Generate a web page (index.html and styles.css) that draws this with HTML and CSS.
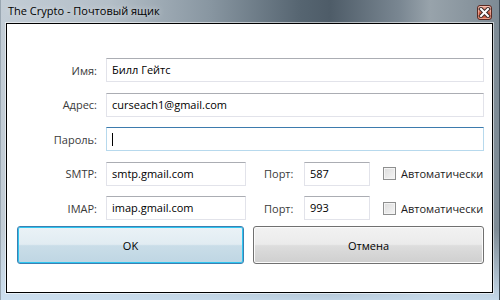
FILE: index.html
```html
<!DOCTYPE html>
<html lang="ru">
<head>
<meta charset="utf-8">
<title>The Crypto - Почтовый ящик</title>
<link rel="stylesheet" href="styles.css">
</head>
<body>
<div class="window">
  <div class="titlebar">
    <span class="title">The Crypto - Почтовый ящик</span>
    <div class="close">
      <svg width="13" height="11" viewBox="0 0 13 11">
        <path d="M3 2 L10 9 M10 2 L3 9" stroke="#3a2a28" stroke-width="4" stroke-linecap="square"/>
        <path d="M3 2 L10 9 M10 2 L3 9" stroke="#ffffff" stroke-width="2" stroke-linecap="square"/>
      </svg>
    </div>
  </div>
  <div class="client">
    <div class="form">
      <div class="row">
        <span class="lbl">Имя:</span>
        <div class="field wide">Билл Гейтс</div>
      </div>
      <div class="row">
        <span class="lbl">Адрес:</span>
        <div class="field wide">curseach1@gmail.com</div>
      </div>
      <div class="row">
        <span class="lbl">Пароль:</span>
        <div class="field wide focused"><span class="caret"></span></div>
      </div>
      <div class="row">
        <span class="lbl">SMTP:</span>
        <div class="field host">smtp.gmail.com</div>
        <span class="port-lbl">Порт:</span>
        <div class="field port">587</div>
        <span class="check"></span>
        <span class="check-lbl">Автоматически</span>
      </div>
      <div class="row">
        <span class="lbl">IMAP:</span>
        <div class="field host">imap.gmail.com</div>
        <span class="port-lbl">Порт:</span>
        <div class="field port">993</div>
        <span class="check"></span>
        <span class="check-lbl">Автоматически</span>
      </div>
    </div>
    <div class="buttons">
      <div class="btn ok">OK</div>
      <div class="btn cancel">Отмена</div>
    </div>
  </div>
</div>
</body>
</html>
```

FILE: styles.css
```css
* { box-sizing: border-box; }
html, body { margin: 0; padding: 0; }
body {
  width: 500px;
  height: 300px;
  overflow: hidden;
  font-family: "Open Sans", "Noto Sans", sans-serif;
  font-size: 11px;
}
.window {
  width: 500px;
  height: 300px;
  display: flex;
  flex-direction: column;
  padding: 0 7px 7px 6px;
  background:
    linear-gradient(180deg, rgba(255,255,255,0) 0px, rgba(255,255,255,0) 230px, rgba(205,225,242,0.9) 300px),
    linear-gradient(90deg, #c3cdd6 0%, #b3bec7 22%, #8896a1 42%, #566571 60%, #4e5c68 66%, #7a8792 80%, #98a3ab 86%, #7d8a94 100%);
  box-shadow: inset -1px 0 0 #3d4a55, inset 1px 0 0 #9aa7b2;
}
.titlebar {
  height: 23px;
  flex: none;
  display: flex;
  align-items: center;
  justify-content: space-between;
  padding: 0 1px 1px 2px;
}
.title {
  color: #000;
  font-size: 11px;
  line-height: 16px;
  text-shadow: 0 0 6px rgba(255,255,255,0.7);
}
.close {
  width: 15px;
  height: 15px;
  margin-top: 2px;
  border: 1px solid #5a2a22;
  border-radius: 3px;
  background: linear-gradient(180deg, #e8a493 0%, #d9735b 48%, #c5482e 52%, #d86a4e 100%);
  display: flex;
  align-items: center;
  justify-content: center;
  box-shadow: inset 0 0 0 1px rgba(255,220,210,0.5);
}
.client {
  flex: 1;
  background: #fff;
  border: 1px solid #000;
  box-shadow: 0 0 0 1px rgba(255,255,255,0.55);
  padding: 34px 8px 0 10px;
  display: flex;
  flex-direction: column;
}
.form {
  display: flex;
  flex-direction: column;
  gap: 10.5px;
}
.row {
  display: flex;
  align-items: center;
  height: 24px;
}
.row > * { flex: none; }
.lbl {
  width: 80px;
  margin-right: 9px;
  text-align: right;
  color: #3a3a3a;
}
.field {
  height: 24px;
  border: 1px solid #e2e3ea;
  border-top-color: #abadb3;
  border-left-color: #e2e3ea;
  background: #fff;
  color: #000;
  padding: 0 5px;
  line-height: 21px;
  white-space: nowrap;
}
.row > .wide { flex: 1; }
.focused {
  border-color: #b7d9ed;
  border-top-color: #3d7bad;
  display: flex;
  align-items: center;
}
.caret {
  width: 1px;
  height: 13px;
  background: #000;
}
.host { width: 140px; }
.port-lbl {
  margin-left: 18px;
  width: 30px;
  color: #3a3a3a;
}
.port {
  width: 66px;
  margin-left: 10px;
}
.check {
  width: 13px;
  height: 13px;
  margin-left: 13px;
  border: 1px solid #8e8f8f;
  background: linear-gradient(135deg, #dcdcdc 0%, #f5f5f5 100%);
  box-shadow: inset 0 0 0 1px #f4f4f4;
}
.check-lbl {
  margin-left: 5px;
  color: #1a1a1a;
  white-space: nowrap;
}
.buttons {
  display: flex;
  gap: 9px;
  margin-top: 6px;
}
.btn {
  height: 38px;
  display: flex;
  align-items: center;
  justify-content: center;
  border-radius: 3px;
  color: #000;
  font-size: 11px;
}
.ok {
  width: 227px;
  border: 1px solid #3c7fb1;
  box-shadow: inset 0 0 0 1px #2fc6f0;
  background: linear-gradient(180deg, #eaf2f6 0%, #e1ecf2 48%, #c9dde8 52%, #bfd6e3 100%);
}
.cancel {
  width: 231px;
  border: 1px solid #707070;
  box-shadow: inset 0 0 0 1px #fbfbfb;
  background: linear-gradient(180deg, #f2f2f2 0%, #ebebeb 48%, #dddddd 52%, #cfcfcf 100%);
}
```
